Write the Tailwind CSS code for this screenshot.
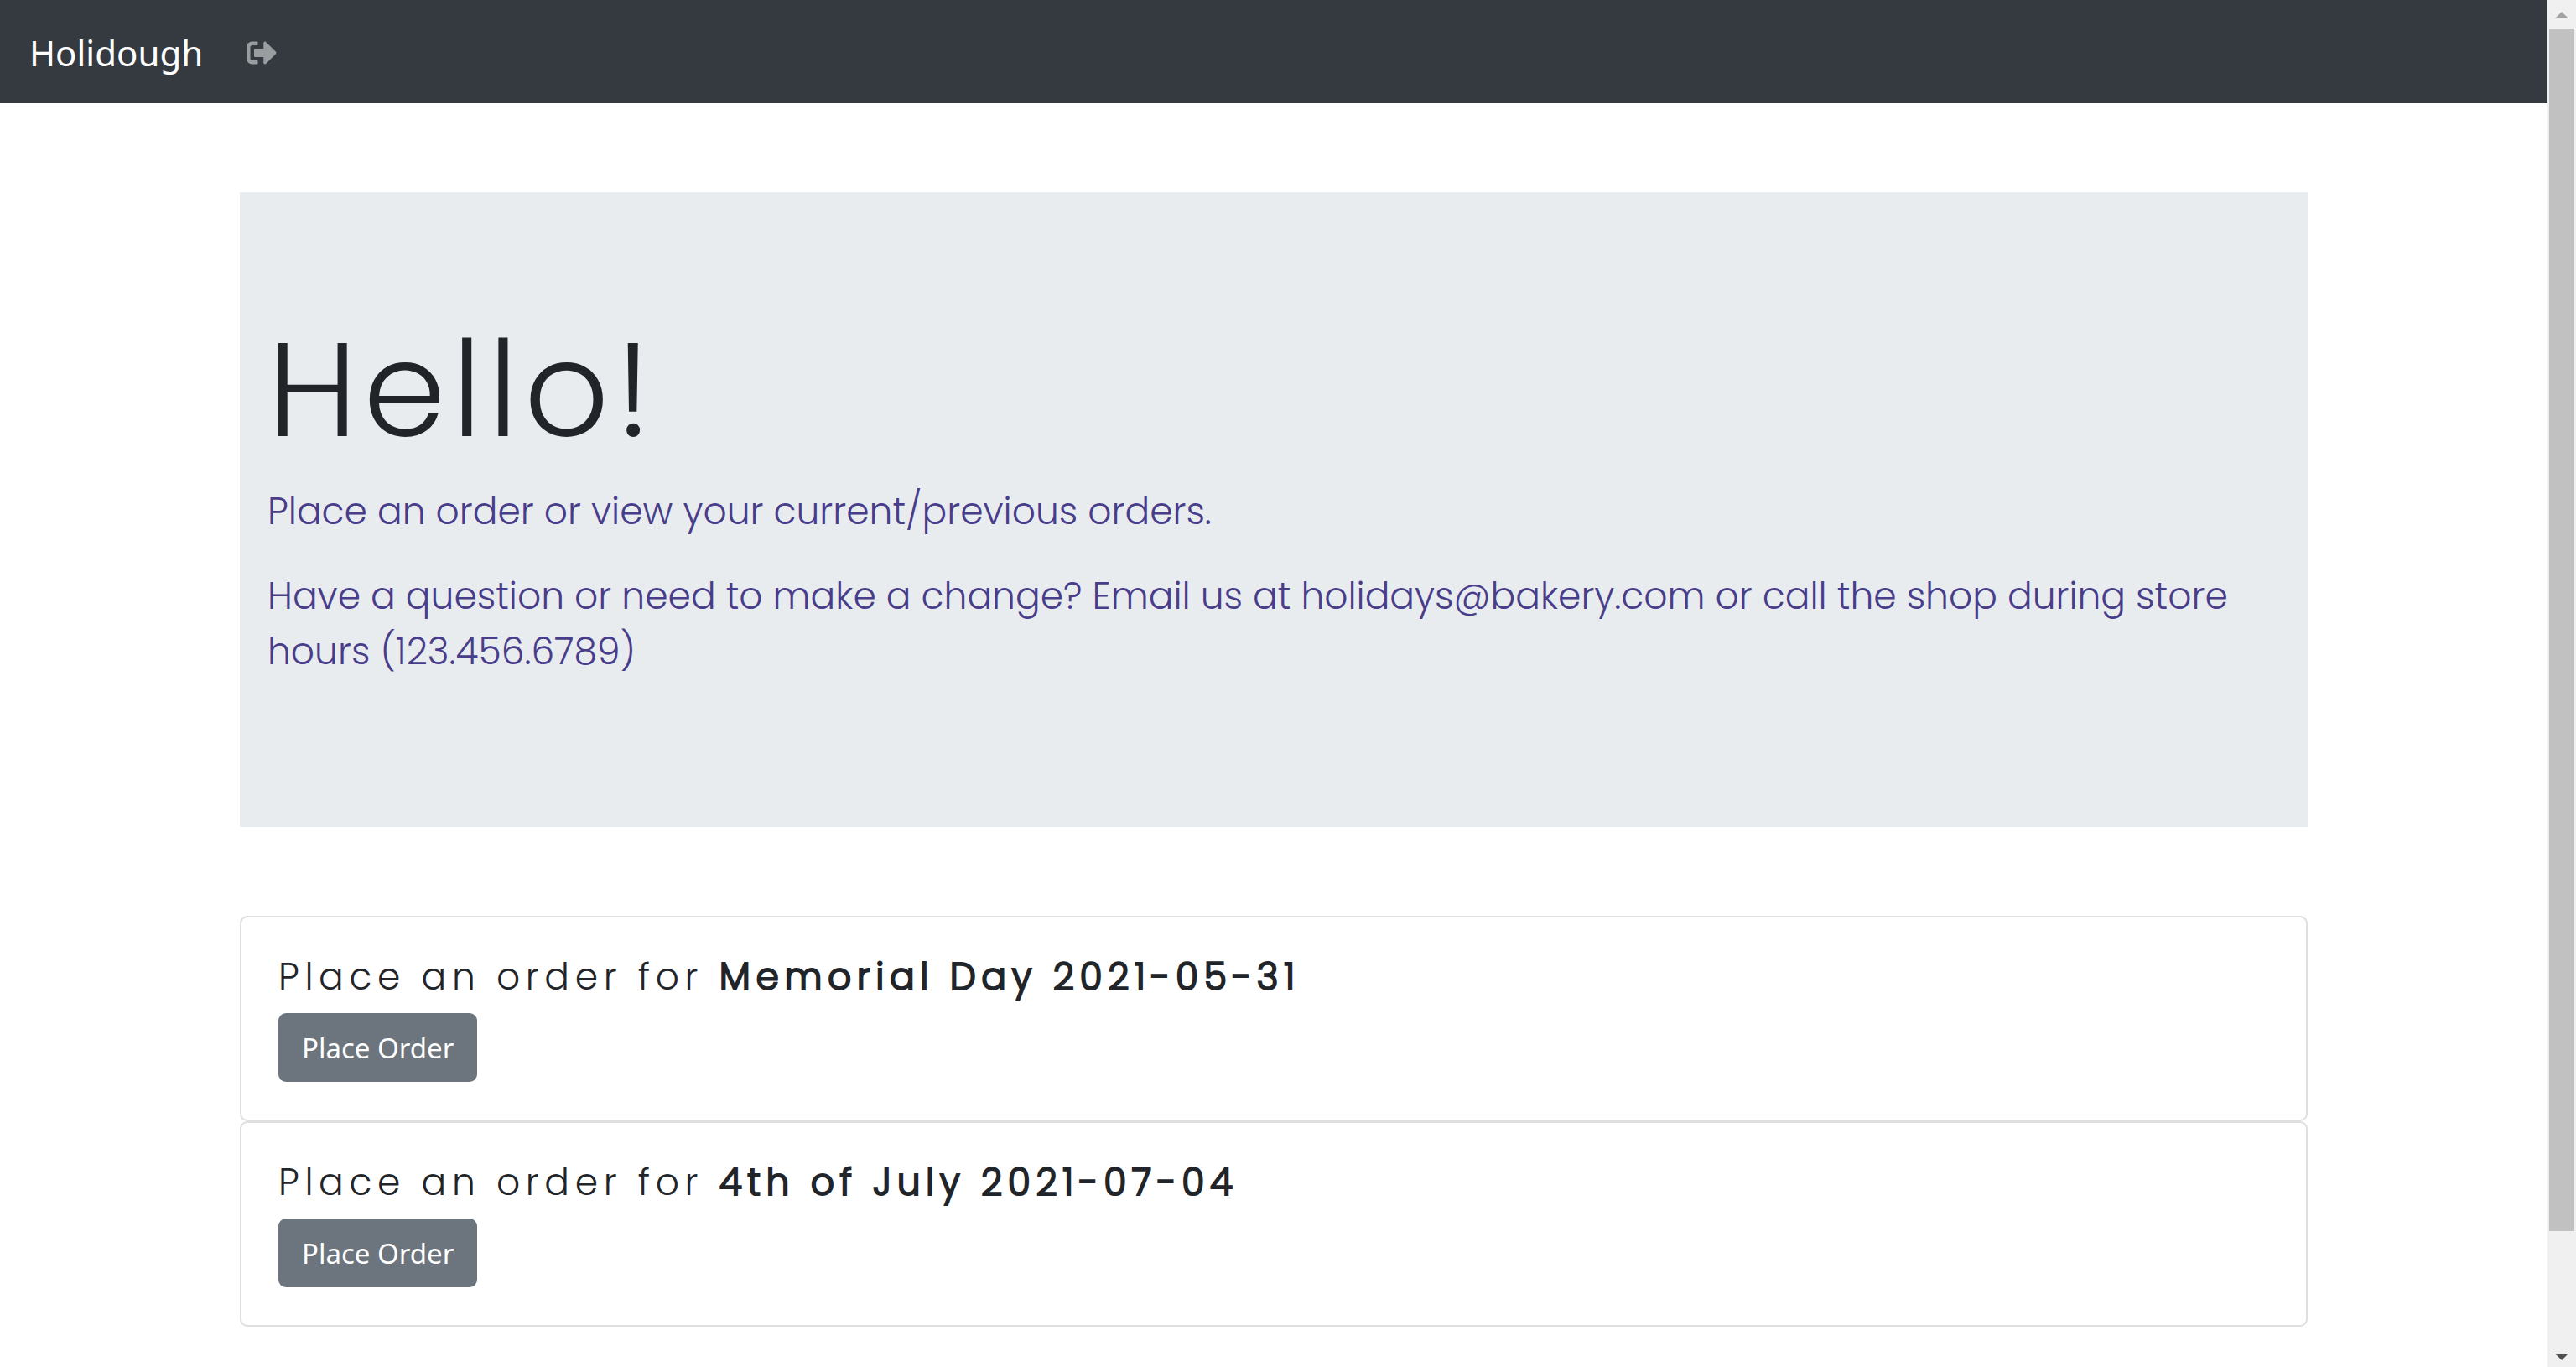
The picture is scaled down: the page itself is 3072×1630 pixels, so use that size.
<!DOCTYPE html>
<html lang="en">
<head>
<meta charset="utf-8">
<title>Holidough</title>
<script src="https://cdn.jsdelivr.net/npm/@tailwindcss/browser@4"></script>
</head>
<body class="flex h-screen overflow-hidden bg-white text-[#212529] font-['Open_Sans',sans-serif]">
  <div class="flex-1 min-w-0">
    <nav class="flex h-[123px] items-center gap-[52px] bg-[#343a40] px-[35px] pt-0.5">
      <a href="#" class="text-[42px] leading-[66px] text-white font-['Noto_Sans',sans-serif]">Holidough</a>
      <a href="#" aria-label="Log out" class="text-white/50">
        <svg class="h-9 w-9" viewBox="0 0 512 512" fill="currentColor"><path d="M497 273L329 441c-15 15-41 4.500-41-17v-96H152c-13.300 0-24-10.700-24-24v-96c0-13.300 10.700-24 24-24h136V88c0-21.400 25.900-32 41-17l168 168c9.300 9.400 9.300 24.600 0 34zM192 436v-40c0-6.600-5.400-12-12-12H96c-17.700 0-32-14.300-32-32V160c0-17.700 14.300-32 32-32h84c6.600 0 12-5.400 12-12V76c0-6.600-5.400-12-12-12H96c-53 0-96 43-96 96v192c0 53 43 96 96 96h84c6.600 0 12-5.400 12-12z"/></svg>
      </a>
    </nav>
    <main class="mx-auto flex w-full max-w-[2466px] flex-col gap-[106px] pt-[106px] font-['Poppins',sans-serif]">
      <header class="bg-[#e9ecef] px-[33px] pt-[140px] pb-44 text-[44px] leading-[66px] font-light text-[#483d8b]">
        <h1 class="mb-4 text-[158px] leading-[192px] tracking-[7px] text-[#212529]">Hello!</h1>
        <p class="mb-[35px]">Place an order or view your current/previous orders.</p>
        <p>Have a question or need to make a change? Email us at holidays@bakery.com or call the shop during store hours (123.456.6789)</p>
      </header>
      <section>
        <article class="h-[245px] rounded-[9px] border-2 border-[#dfdfdf] px-11 pt-11">
          <h2 class="mb-[17px] text-[44px] leading-[53px] font-light tracking-[0.15em]">Place an order for <strong class="font-light [-webkit-text-stroke:2px_currentColor]">Memorial Day 2021-05-31</strong></h2>
          <button type="button" class="block h-[82px] rounded-[9px] bg-[#6c757d] px-7 pt-0.5 text-[33px] text-white font-['Noto_Sans',sans-serif]">Place Order</button>
        </article>
        <article class="h-[245px] rounded-[9px] border-2 border-[#dfdfdf] px-11 pt-11">
          <h2 class="mb-[17px] text-[44px] leading-[53px] font-light tracking-[0.15em]">Place an order for <strong class="font-light [-webkit-text-stroke:2px_currentColor]">4th of July 2021-07-04</strong></h2>
          <button type="button" class="block h-[82px] rounded-[9px] bg-[#6c757d] px-7 pt-0.5 text-[33px] text-white font-['Noto_Sans',sans-serif]">Place Order</button>
        </article>
      </section>
    </main>
  </div>
  <aside aria-hidden="true" class="flex w-[34px] shrink-0 flex-col items-center bg-[#f0f0f0]">
    <svg class="h-[34px] w-4 shrink-0" viewBox="0 0 16 34" fill="#a3a3a3"><path d="M0 22L8 14L16 22Z"/></svg>
    <div class="h-[88%] w-[30px] bg-[#c1c1c1]"></div>
    <svg class="mt-auto h-[34px] w-4 shrink-0" viewBox="0 0 16 34" fill="#505050"><path d="M0 18H16L8 26Z"/></svg>
  </aside>
</body>
</html>
